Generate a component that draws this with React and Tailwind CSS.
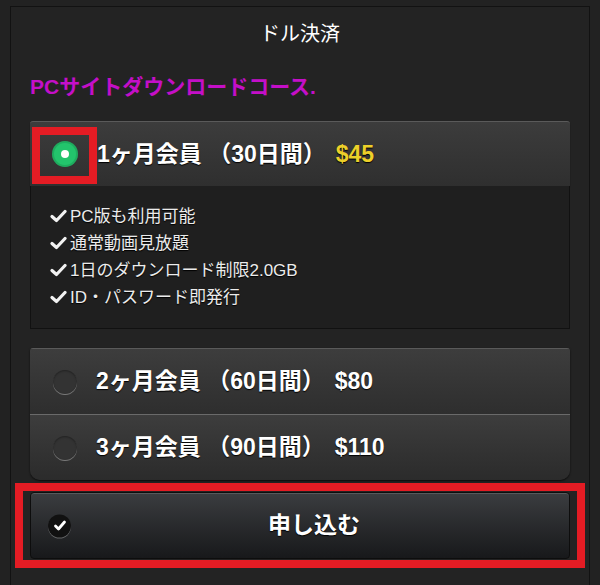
import React from "react";

const font = { fontFamily: '"Liberation Sans", "Noto Sans CJK JP", sans-serif' };

function Radio({ checked }) {
  if (checked) {
    return (
      <div className="w-[26px] h-[26px] rounded-full bg-[#23c46c] flex items-center justify-center shadow-[inset_0_0_0_2px_rgba(0,0,0,0.12)]">
        <div className="w-[8px] h-[8px] rounded-full bg-white" />
      </div>
    );
  }
  return (
    <div className="w-[24px] h-[24px] rounded-full bg-[#333] shadow-[0_1px_0_rgba(255,255,255,0.35),inset_0_1px_2px_rgba(0,0,0,0.35)]" />
  );
}

function Option({ label, price, priceClass }) {
  return (
    <div className="ml-[19px] flex items-center">
      <span className="text-[23px] font-bold text-white [text-shadow:0_1px_1px_#000] whitespace-pre">{label}</span>
      <span className={"text-[23px] font-bold [text-shadow:0_1px_1px_#000] ml-[10px] " + priceClass}>{price}</span>
    </div>
  );
}

function Check() {
  return (
    <svg width="17" height="14" viewBox="0 0 17 14" className="inline-block mr-[3px] align-[-1px]">
      <path d="M2 7.5 L6.5 11.5 L15 2.5" stroke="#f2f2f2" strokeWidth="3.2" fill="none" strokeLinecap="round" strokeLinejoin="round" />
    </svg>
  );
}

export default function App() {
  return (
    <div className="w-[600px] h-[585px] bg-[#222] overflow-hidden pt-[6px] px-[10px] relative" style={font}>
      <div className="h-[600px] border border-[#121212] bg-[#232323] px-[19px]">
        <div className="h-[54px] flex items-center justify-center text-[20px] text-white">
          ドル決済
        </div>
        <div className="pt-[14px] pb-[22px] text-[21px] leading-[24px] font-bold text-[#c40fc8]">
          PCサイトダウンロードコース.
        </div>

        {/* Option 1 */}
        <div>
          <div className="h-[65px] rounded-t-[3px] border-t border-[#5a5a5a] bg-gradient-to-b from-[#3c3c3c] to-[#2f2f2f] flex items-center pl-[22px] shadow-[0_1px_1px_rgba(0,0,0,0.6)]">
            <Radio checked />
            <Option label="1ヶ月会員 （30日間）" price="$45" priceClass="text-[#ecd02a]" />
          </div>
          <div className="border border-t-0 border-[#111] bg-[#1f1f1f] pt-[17px] pb-[17px] pl-[19px] text-[17px] leading-[27px] text-[#ececec] [text-shadow:0_1px_1px_#000]">
            <div><Check />PC版も利用可能</div>
            <div><Check />通常動画見放題</div>
            <div><Check />1日のダウンロード制限2.0GB</div>
            <div><Check />ID・パスワード即発行</div>
          </div>
        </div>

        {/* Options 2 & 3 */}
        <div className="mt-[19px] rounded-t-[3px] rounded-b-[10px] overflow-hidden shadow-[0_1px_2px_rgba(0,0,0,0.7)]">
          <div className="h-[66px] border-t border-[#5a5a5a] bg-gradient-to-b from-[#3d3d3d] to-[#2e2e2e] flex items-center pl-[23px]">
            <Radio />
            <Option label="2ヶ月会員 （60日間）" price="$80" priceClass="text-white" />
          </div>
          <div className="h-[66px] border-t border-[#6a6a6a] bg-gradient-to-b from-[#3d3d3d] to-[#2b2b2b] flex items-center pl-[23px]">
            <Radio />
            <Option label="3ヶ月会員 （90日間）" price="$110" priceClass="text-white" />
          </div>
        </div>

        {/* Submit button */}
        <div className="mt-[12px] h-[67px] rounded-[4px] border border-[#0d0d0d] bg-gradient-to-b from-[#3b3d40] to-[#18191b] shadow-[inset_0_1px_0_rgba(255,255,255,0.15)] flex items-center relative pl-[28px]">
          <div className="absolute left-[17px] top-1/2 -translate-y-1/2 w-[23px] h-[23px] rounded-full bg-[#111] flex items-center justify-center shadow-[0_1px_0_rgba(255,255,255,0.3)]">
            <svg width="14" height="14" viewBox="0 0 14 14">
              <path d="M2.5 7.5 L5.5 10.5 L11.5 3.5" stroke="white" strokeWidth="2.8" fill="none" strokeLinecap="round" strokeLinejoin="round" />
            </svg>
          </div>
          <div className="w-full text-center text-[23px] font-bold text-white [text-shadow:0_1px_1px_#000]">
            申し込む
          </div>
        </div>
      </div>

      {/* Red annotation boxes */}
      <div className="absolute left-[32px] top-[127px] w-[65px] h-[57px] border-[8px] border-[#e41c24]" />
      <div className="absolute left-[15px] top-[483px] w-[570px] h-[85px] border-[8px] border-[#e41c24]" />
    </div>
  );
}
